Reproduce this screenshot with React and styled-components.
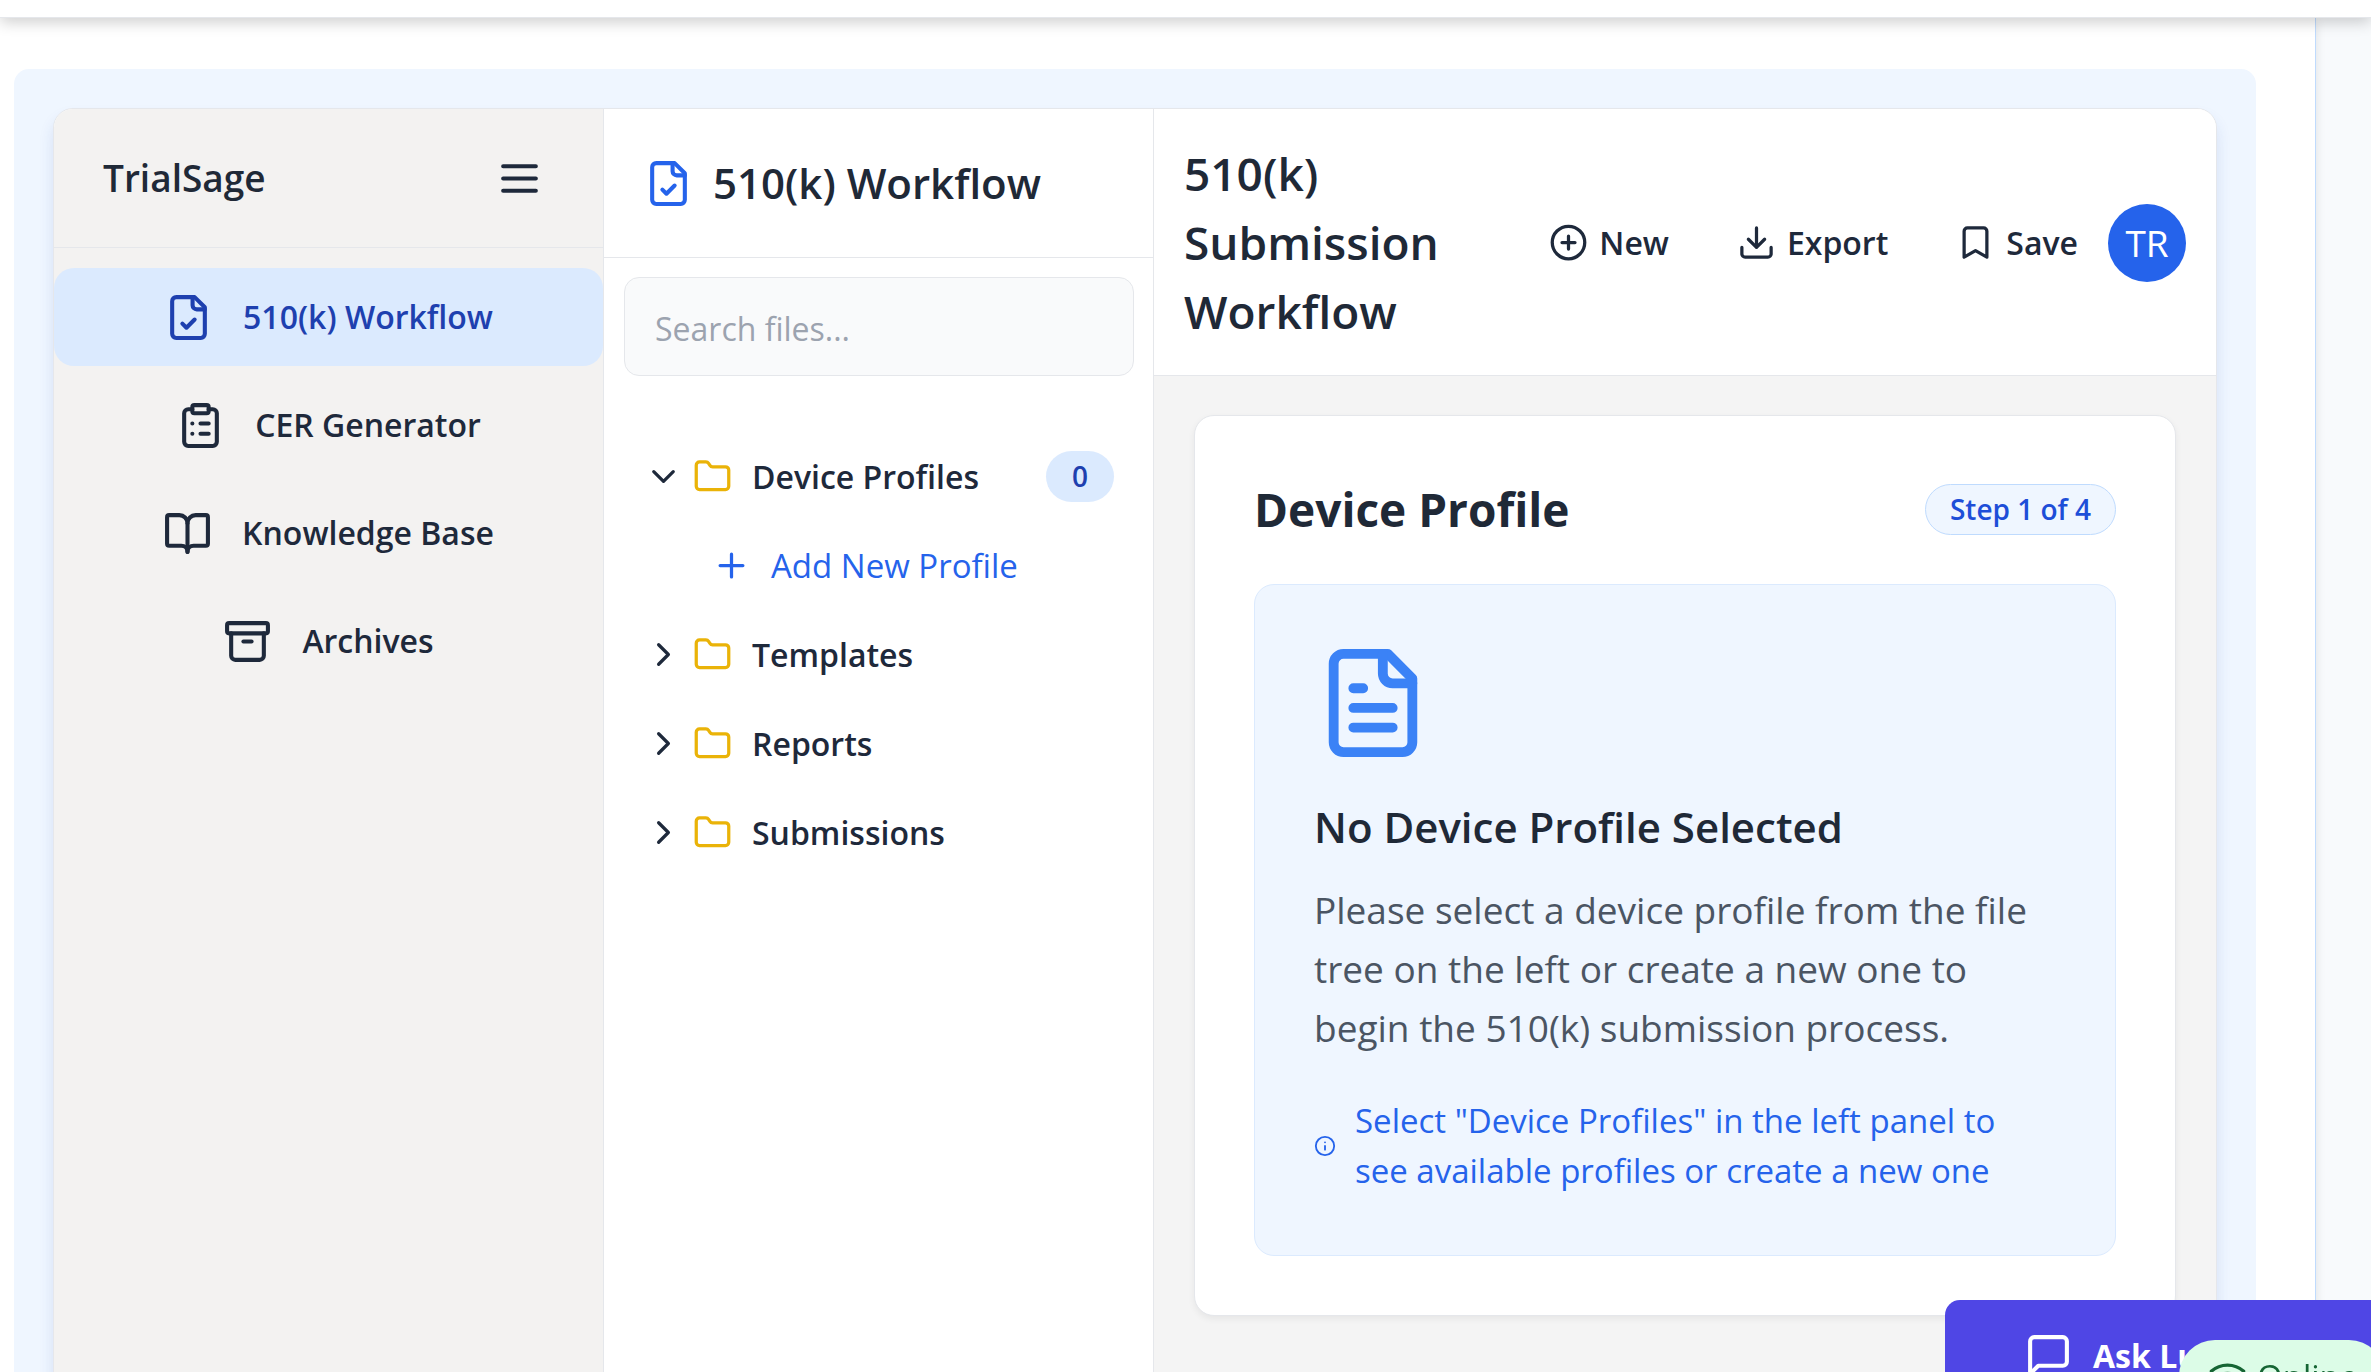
import React from "react";
import styled, { createGlobalStyle } from "styled-components";

const color = {
  ink: "#1f2937",
  inkIcon: "#1e293b",
  muted: "#4b5563",
  line: "#e5e7eb",
  blue: "#2563eb",
  blueDark: "#1e40af",
  blueTint: "#eff6ff",
  blueSoft: "#dbeafe",
};

const text = {
  xs: "28px",
  sm: "32px",
  md: "33px",
  base: "37px",
  lg: "42px",
  xl: "46px",
};

const GlobalStyle = createGlobalStyle`
  *, *::before, *::after { box-sizing: border-box; }
  body {
    margin: 0;
    overflow: hidden;
    background: #f8fafc;
    color: ${color.ink};
    font-family: "Open Sans", "Noto Sans", sans-serif;
    font-size: ${text.base};
    line-height: 59px;
  }
  h1, h2, h3, p, ul { margin: 0; padding: 0; }
  ul { list-style: none; }
  button, input { font: inherit; color: inherit; }
  button { margin: 0; border: 0; background: none; cursor: pointer; }
`;

const Svg = styled.svg`
  display: block;
  flex: none;
  width: ${(p) => p.$size}px;
  height: ${(p) => p.$size}px;
  color: ${(p) => p.$color || "inherit"};
`;

const shapes = {
  menu: <path d="M4 6h16M4 12h16M4 18h16" />,
  fileCheck: (
    <>
      <path d="M15 2H6a2 2 0 0 0-2 2v16a2 2 0 0 0 2 2h12a2 2 0 0 0 2-2V7Z" />
      <path d="M14 2v4a2 2 0 0 0 2 2h4" />
      <path d="m9 15 2 2 4-4" />
    </>
  ),
  fileText: (
    <>
      <path d="M15 2H6a2 2 0 0 0-2 2v16a2 2 0 0 0 2 2h12a2 2 0 0 0 2-2V7Z" />
      <path d="M14 2v4a2 2 0 0 0 2 2h4" />
      <path d="M10 9H8M16 13H8M16 17H8" />
    </>
  ),
  clipboard: (
    <>
      <rect width="8" height="4" x="8" y="2" rx="1" />
      <path d="M16 4h2a2 2 0 0 1 2 2v14a2 2 0 0 1-2 2H6a2 2 0 0 1-2-2V6a2 2 0 0 1 2-2h2" />
      <path d="M12 11h4M12 16h4M8 11h.01M8 16h.01" />
    </>
  ),
  book: (
    <>
      <path d="M12 7v14" />
      <path d="M3 18a1 1 0 0 1-1-1V4a1 1 0 0 1 1-1h5a4 4 0 0 1 4 4 4 4 0 0 1 4-4h5a1 1 0 0 1 1 1v13a1 1 0 0 1-1 1h-6a3 3 0 0 0-3 3 3 3 0 0 0-3-3z" />
    </>
  ),
  archive: (
    <>
      <rect width="20" height="5" x="2" y="3" rx="1" />
      <path d="M4 8v11a2 2 0 0 0 2 2h12a2 2 0 0 0 2-2V8" />
      <path d="M10 12h4" />
    </>
  ),
  folder: (
    <path d="M20 20a2 2 0 0 0 2-2V8a2 2 0 0 0-2-2h-7.9a2 2 0 0 1-1.69-.9L9.6 3.9A2 2 0 0 0 7.93 3H4a2 2 0 0 0-2 2v13a2 2 0 0 0 2 2Z" />
  ),
  chevronDown: <path d="m6 9 6 6 6-6" />,
  chevronRight: <path d="m9 18 6-6-6-6" />,
  plus: <path d="M5 12h14M12 5v14" />,
  plusCircle: (
    <>
      <circle cx="12" cy="12" r="10" />
      <path d="M8 12h8M12 8v8" />
    </>
  ),
  download: (
    <>
      <path d="M21 15v4a2 2 0 0 1-2 2H5a2 2 0 0 1-2-2v-4" />
      <path d="m7 10 5 5 5-5M12 15V3" />
    </>
  ),
  bookmark: <path d="m19 21-7-4-7 4V5a2 2 0 0 1 2-2h10a2 2 0 0 1 2 2v16z" />,
  info: (
    <>
      <circle cx="12" cy="12" r="10" />
      <path d="M12 16v-4M12 8h.01" />
    </>
  ),
  message: <path d="M21 15a2 2 0 0 1-2 2H7l-4 4V5a2 2 0 0 1 2-2h14a2 2 0 0 1 2 2z" />,
  wifi: (
    <>
      <path d="M12 20h.01" />
      <path d="M2 8.82a15 15 0 0 1 20 0" />
      <path d="M5 12.859a10 10 0 0 1 14 0" />
      <path d="M8.5 16.429a5 5 0 0 1 7 0" />
    </>
  ),
};

function Icon({ name, size = 39, tint }) {
  return (
    <Svg
      $size={size}
      $color={tint}
      viewBox="0 0 24 24"
      fill="none"
      stroke="currentColor"
      strokeWidth="2"
      strokeLinecap="round"
      strokeLinejoin="round"
      aria-hidden="true"
    >
      {shapes[name]}
    </Svg>
  );
}

const Page = styled.div`
  display: flex;
  flex-direction: column;
  height: 100vh;
  overflow: hidden;
`;

const TopBar = styled.header`
  position: relative;
  z-index: 1;
  flex: none;
  height: 18px;
  background: #fff;
  border-bottom: 1px solid ${color.line};
  box-shadow: 0 4px 15px rgba(0, 0, 0, 0.2);
`;

const Content = styled.main`
  flex: none;
  min-height: 110vh;
  margin-right: 55px;
  padding: 51px 59px 0 14px;
  display: flex;
  background: #fff;
  border-right: 1px solid #bfdbfe;
  box-shadow: 0 3px 10px rgba(0, 0, 0, 0.1);
`;

const Stage = styled.div`
  flex: 1;
  min-width: 0;
  display: flex;
  padding: 39px;
  background: ${color.blueTint};
  border-radius: 15px;
`;

const Workspace = styled.div`
  flex: 1;
  min-width: 0;
  display: grid;
  grid-template-columns: 550px 550px minmax(0, 1fr);
  overflow: hidden;
  background: #fff;
  border: 1px solid ${color.line};
  border-radius: 20px;
  box-shadow: 0 10px 15px rgba(30, 64, 175, 0.12);
`;

const Sidebar = styled.aside`
  background: #f3f2f1;
  border-right: 1px solid ${color.line};
`;

const SidebarHeader = styled.div`
  display: flex;
  align-items: center;
  justify-content: space-between;
  padding: 39px 49px;
  border-bottom: 1px solid ${color.line};
`;

const Brand = styled.h1`
  font-size: ${text.base};
  font-weight: 600;
  line-height: 60px;
`;

const IconButton = styled.button`
  padding: 0 10px;
  color: ${color.inkIcon};
`;

const NavList = styled.ul`
  display: grid;
  gap: 10px;
  padding-top: 20px;
`;

const NavButton = styled.button`
  width: 100%;
  display: flex;
  align-items: center;
  justify-content: center;
  gap: 30px;
  padding: 24px;
  border-radius: 20px;
  background: ${(p) => (p.$active ? color.blueSoft : "transparent")};
  color: ${(p) => (p.$active ? color.blueDark : color.inkIcon)};
  font-size: ${text.sm};
  font-weight: 600;
  line-height: 50px;
`;

const FilePanel = styled.section`
  border-right: 1px solid ${color.line};
`;

const FileHeader = styled.div`
  display: flex;
  align-items: center;
  gap: 20px;
  padding: 39px 40px;
  border-bottom: 1px solid ${color.line};
`;

const FileTitle = styled.h2`
  font-size: ${text.lg};
  font-weight: 600;
  line-height: 70px;
`;

const SearchBox = styled.label`
  display: block;
  padding: 19px 19px 0 20px;
`;

const SearchInput = styled.input`
  display: block;
  width: 100%;
  height: 99px;
  padding: 4px 30px 0;
  border: 1px solid ${color.line};
  border-radius: 15px;
  background: #f9fafb;
  font-size: ${text.sm};
  outline: none;
  &::placeholder {
    color: #9ca3af;
    opacity: 1;
  }
`;

const Tree = styled.ul`
  padding: 56px 19px 0 20px;
`;

const TreeRow = styled.button`
  width: 100%;
  display: flex;
  align-items: center;
  gap: 10px;
  padding: 19px 20px;
  color: ${color.inkIcon};
  font-size: ${text.sm};
  font-weight: 600;
  line-height: 51px;
  text-align: left;
`;

const TreeLabel = styled.span`
  flex: 1;
  padding-left: 10px;
`;

const Count = styled.span`
  padding: 0 26px;
  border-radius: 26px;
  background: ${color.blueSoft};
  color: ${color.blueDark};
  font-size: ${text.xs};
`;

const AddRow = styled(TreeRow)`
  padding-left: 88px;
  gap: 20px;
  color: ${color.blue};
  font-size: ${text.md};
  font-weight: 400;
`;

const WorkPanel = styled.section`
  display: flex;
  flex-direction: column;
  background: #f4f4f4;
`;

const WorkHeader = styled.div`
  display: flex;
  align-items: center;
  justify-content: space-between;
  padding: 30px 30px 29px;
  background: #fff;
  border-bottom: 1px solid ${color.line};
`;

const WorkTitle = styled.h2`
  flex: 0 1 280px;
  font-size: ${text.xl};
  font-weight: 600;
  line-height: 69px;
`;

const Actions = styled.div`
  display: flex;
  align-items: center;
  gap: 10px;
`;

const ActionButton = styled.button`
  display: flex;
  align-items: center;
  gap: 11px;
  padding: 0 29px;
  color: ${color.inkIcon};
  font-size: ${text.sm};
  font-weight: 600;
  line-height: 50px;
  &:last-of-type {
    padding-right: 20px;
  }
`;

const Avatar = styled.span`
  display: grid;
  place-items: center;
  width: 78px;
  height: 78px;
  border-radius: 50%;
  background: ${color.blue};
  color: #fff;
`;

const Card = styled.article`
  margin: 39px 40px;
  padding: 59px;
  background: #fff;
  border: 1px solid ${color.line};
  border-radius: 20px;
  box-shadow: 0 3px 7px rgba(0, 0, 0, 0.06);
`;

const CardHeader = styled.div`
  display: flex;
  align-items: center;
  justify-content: space-between;
  margin-bottom: 40px;
`;

const CardTitle = styled.h2`
  font-size: ${text.xl};
  font-weight: 700;
  line-height: 69px;
`;

const StepBadge = styled.span`
  padding: 0 24px;
  border: 1px solid #bfdbfe;
  border-radius: 26px;
  background: ${color.blueTint};
  color: #1d4ed8;
  font-size: ${text.xs};
  font-weight: 600;
  line-height: 49px;
`;

const EmptyState = styled.div`
  padding: 59px;
  background: ${color.blueTint};
  border: 1px solid ${color.blueSoft};
  border-radius: 20px;
`;

const EmptyTitle = styled.h3`
  margin: 30px 0 19px;
  font-size: ${text.lg};
  font-weight: 600;
  line-height: 69px;
`;

const EmptyText = styled.p`
  color: ${color.muted};
`;

const Hint = styled.p`
  display: flex;
  align-items: center;
  gap: 19px;
  margin-top: 39px;
  color: ${color.blue};
  font-size: ${text.md};
  line-height: 50px;
`;

const AskButton = styled.button`
  position: fixed;
  left: calc(100% - 426px);
  bottom: -39px;
  width: 466px;
  height: 111px;
  display: flex;
  align-items: center;
  gap: 20px;
  padding: 0 79px;
  border-radius: 15px;
  background: #4f46e5;
  color: #fff;
  font-size: ${text.sm};
  font-weight: 700;
  white-space: nowrap;
`;

const OnlineBadge = styled.div`
  position: fixed;
  left: calc(100% - 192px);
  bottom: -40px;
  width: 206px;
  height: 72px;
  display: flex;
  align-items: center;
  gap: 10px;
  padding: 0 29px;
  border-radius: 36px;
  background: #dcfce7;
  color: #166534;
  font-size: ${text.md};
`;

const navItems = [
  { icon: "fileCheck", label: "510(k) Workflow", active: true },
  { icon: "clipboard", label: "CER Generator" },
  { icon: "book", label: "Knowledge Base" },
  { icon: "archive", label: "Archives" },
];

const actions = [
  { icon: "plusCircle", label: "New" },
  { icon: "download", label: "Export" },
  { icon: "bookmark", label: "Save" },
];

const folders = [
  { label: "Device Profiles", open: true, count: 0 },
  { label: "Templates" },
  { label: "Reports" },
  { label: "Submissions" },
];

export default function App() {
  return (
    <Page>
      <GlobalStyle />
      <TopBar />
      <Content>
        <Stage>
          <Workspace>
            <Sidebar>
              <SidebarHeader>
                <Brand>TrialSage</Brand>
                <IconButton aria-label="Toggle menu">
                  <Icon name="menu" size={49} />
                </IconButton>
              </SidebarHeader>
              <nav>
                <NavList>
                  {navItems.map((item) => (
                    <li key={item.label}>
                      <NavButton $active={item.active}>
                        <Icon name={item.icon} size={49} />
                        <span>{item.label}</span>
                      </NavButton>
                    </li>
                  ))}
                </NavList>
              </nav>
            </Sidebar>

            <FilePanel>
              <FileHeader>
                <Icon name="fileCheck" size={49} tint={color.blue} />
                <FileTitle>510(k) Workflow</FileTitle>
              </FileHeader>
              <SearchBox>
                <SearchInput type="text" placeholder="Search files..." aria-label="Search files" />
              </SearchBox>
              <Tree>
                {folders.map((folder) => (
                  <li key={folder.label}>
                    <TreeRow aria-expanded={Boolean(folder.open)}>
                      <Icon name={folder.open ? "chevronDown" : "chevronRight"} />
                      <Icon name="folder" tint="#eab308" />
                      <TreeLabel>{folder.label}</TreeLabel>
                      {folder.count !== undefined && <Count>{folder.count}</Count>}
                    </TreeRow>
                    {folder.open && (
                      <AddRow>
                        <Icon name="plus" />
                        <span>Add New Profile</span>
                      </AddRow>
                    )}
                  </li>
                ))}
              </Tree>
            </FilePanel>

            <WorkPanel>
              <WorkHeader>
                <WorkTitle>510(k) Submission Workflow</WorkTitle>
                <Actions>
                  {actions.map((action) => (
                    <ActionButton key={action.label}>
                      <Icon name={action.icon} />
                      <span>{action.label}</span>
                    </ActionButton>
                  ))}
                  <Avatar>TR</Avatar>
                </Actions>
              </WorkHeader>
              <Card>
                <CardHeader>
                  <CardTitle>Device Profile</CardTitle>
                  <StepBadge>Step 1 of 4</StepBadge>
                </CardHeader>
                <EmptyState>
                  <Icon name="fileText" size={118} tint="#3b82f6" />
                  <EmptyTitle>No Device Profile Selected</EmptyTitle>
                  <EmptyText>
                    Please select a device profile from the file tree on the left or create a new one
                    to begin the 510(k) submission process.
                  </EmptyText>
                  <Hint>
                    <Icon name="info" size={22} />
                    <span>
                      Select "Device Profiles" in the left panel to see available profiles or create a
                      new one
                    </span>
                  </Hint>
                </EmptyState>
              </Card>
            </WorkPanel>
          </Workspace>
        </Stage>
      </Content>
      <AskButton>
        <Icon name="message" size={49} />
        <span>Ask Lumen</span>
      </AskButton>
      <OnlineBadge role="status">
        <Icon name="wifi" />
        <span>Online</span>
      </OnlineBadge>
    </Page>
  );
}
